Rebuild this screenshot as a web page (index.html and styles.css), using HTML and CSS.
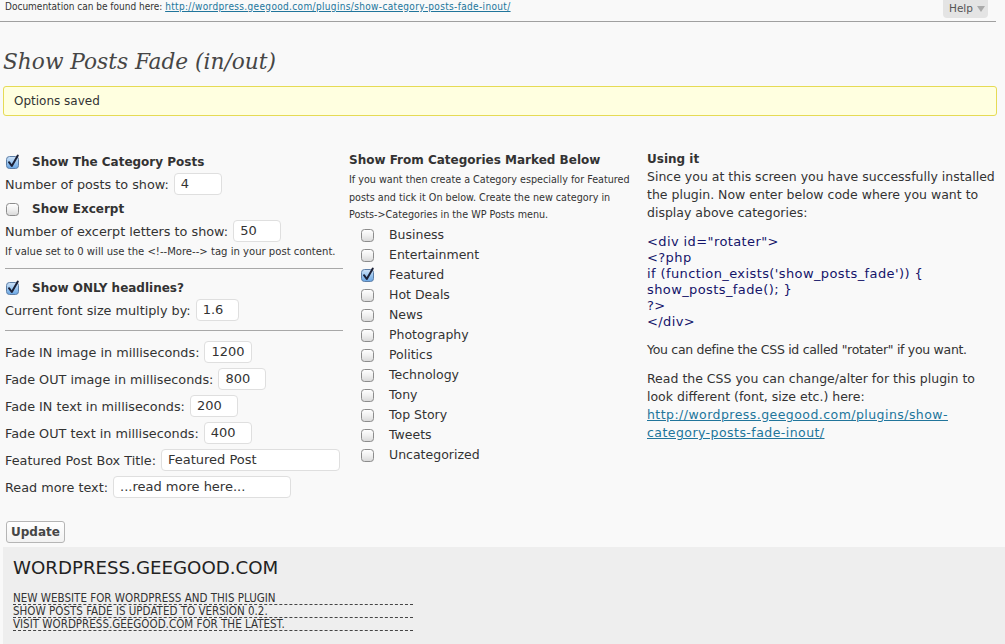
FILE: index.html
```html
<!DOCTYPE html>
<html>
<head>
<meta charset="utf-8">
<link rel="stylesheet" href="styles.css">
</head>
<body>
<div class="topbar">
  <div class="doc">Documentation can be found here: <a href="#">http://wordpress.geegood.com/plugins/show-category-posts-fade-inout/</a></div>
  <div class="help">Help <span class="tri"></span></div>
</div>

<h2 class="title">Show Posts Fade (in/out)</h2>

<div class="notice">Options saved</div>

<div class="columns">
  <div class="col-left">
    <div class="cbrow first"><svg class="cb" viewBox="0 0 14 14"><use href="#cb-on"/></svg><b>Show The Category Posts</b></div>
    <div class="inrow">Number of posts to show: <span class="inp w48">4</span></div>
    <div class="cbrow"><svg class="cb" viewBox="0 0 14 14"><use href="#cb-off"/></svg><b>Show Excerpt</b></div>
    <div class="inrow">Number of excerpt letters to show: <span class="inp w48">50</span></div>
    <div class="small">If value set to 0 will use the &lt;!--More--&gt; tag in your post content.</div>
    <div class="sep"></div>
    <div class="cbrow afterhr"><svg class="cb" viewBox="0 0 14 14"><use href="#cb-on"/></svg><b>Show ONLY headlines?</b></div>
    <div class="inrow">Current font size multiply by: <span class="inp w43">1.6</span></div>
    <div class="sep"></div>
    <div class="inrow fade first-fade">Fade IN image in milliseconds: <span class="inp w48">1200</span></div>
    <div class="inrow fade">Fade OUT image in milliseconds: <span class="inp w48">800</span></div>
    <div class="inrow fade">Fade IN text in milliseconds: <span class="inp w48">200</span></div>
    <div class="inrow fade">Fade OUT text in milliseconds: <span class="inp w48">400</span></div>
    <div class="inrow fade">Featured Post Box Title: <span class="inp w179">Featured Post</span></div>
    <div class="inrow fade">Read more text: <span class="inp w178">...read more here...</span></div>
    <div class="btnrow"><span class="btn">Update</span></div>
  </div>

  <div class="col-mid">
    <div class="mhead">Show From Categories Marked Below</div>
    <div class="mdesc">If you want then create a Category especially for Featured posts and tick it On below. Create the new category in Posts-&gt;Categories in the WP Posts menu.</div>
    <ul class="cats">
      <li><svg class="cb" viewBox="0 0 14 14"><use href="#cb-off"/></svg>Business</li>
      <li><svg class="cb" viewBox="0 0 14 14"><use href="#cb-off"/></svg>Entertainment</li>
      <li><svg class="cb" viewBox="0 0 14 14"><use href="#cb-on"/></svg>Featured</li>
      <li><svg class="cb" viewBox="0 0 14 14"><use href="#cb-off"/></svg>Hot Deals</li>
      <li><svg class="cb" viewBox="0 0 14 14"><use href="#cb-off"/></svg>News</li>
      <li><svg class="cb" viewBox="0 0 14 14"><use href="#cb-off"/></svg>Photography</li>
      <li><svg class="cb" viewBox="0 0 14 14"><use href="#cb-off"/></svg>Politics</li>
      <li><svg class="cb" viewBox="0 0 14 14"><use href="#cb-off"/></svg>Technology</li>
      <li><svg class="cb" viewBox="0 0 14 14"><use href="#cb-off"/></svg>Tony</li>
      <li><svg class="cb" viewBox="0 0 14 14"><use href="#cb-off"/></svg>Top Story</li>
      <li><svg class="cb" viewBox="0 0 14 14"><use href="#cb-off"/></svg>Tweets</li>
      <li><svg class="cb" viewBox="0 0 14 14"><use href="#cb-off"/></svg>Uncategorized</li>
    </ul>
  </div>

  <div class="col-right">
    <div class="rhead">Using it</div>
    <p class="rp">Since you at this screen you have successfully installed the plugin. Now enter below code where you want to display above categories:</p>
    <div class="code">&lt;div id="rotater"&gt;<br>&lt;?php<br>if (function_exists('show_posts_fade')) {<br>show_posts_fade(); }<br>?&gt;<br>&lt;/div&gt;</div>
    <p class="rp p2">You can define the CSS id called "rotater" if you want.</p>
    <p class="rp p3">Read the CSS you can change/alter for this plugin to look different (font, size etc.) here: <a class="rlink" href="#">http://wordpress.geegood.com/plugins/show-category-posts-fade-inout/</a></p>
  </div>
</div>

<div class="footer">
  <div class="fhead">WORDPRESS.GEEGOOD.COM</div>
  <div class="fline">NEW WEBSITE FOR WORDPRESS AND THIS PLUGIN</div>
  <div class="fline">SHOW POSTS FADE IS UPDATED TO VERSION 0.2.</div>
  <div class="fline">VISIT WORDPRESS.GEEGOOD.COM FOR THE LATEST.</div>
</div>

<svg class="defs" width="0" height="0">
  <defs>
    <linearGradient id="gOff" x1="0" y1="0" x2="0" y2="1">
      <stop offset="0" stop-color="#ffffff"/>
      <stop offset="0.5" stop-color="#f0f0f0"/>
      <stop offset="1" stop-color="#d8d8d8"/>
    </linearGradient>
    <linearGradient id="gOn" x1="0" y1="0" x2="0" y2="1">
      <stop offset="0" stop-color="#cfe3f8"/>
      <stop offset="0.5" stop-color="#9cc6ef"/>
      <stop offset="1" stop-color="#6aa6e4"/>
    </linearGradient>
    <g id="cb-off">
      <rect x="0.5" y="1.5" width="12" height="12" rx="3" fill="url(#gOff)" stroke="#8c8c8c"/>
    </g>
    <g id="cb-on">
      <rect x="0.5" y="1.5" width="12" height="12" rx="3" fill="url(#gOn)" stroke="#5d7ea6"/>
      <path d="M3 7.2 L5.8 11 L11.8 0.6" fill="none" stroke="#1b2036" stroke-width="2" stroke-linecap="round" stroke-linejoin="round"/>
    </g>
  </defs>
</svg>
</body>
</html>
```
FILE: styles.css
```css
html, body {
  margin: 0;
  padding: 0;
}
body {
  background: #f9f9f9;
  font-family: "DejaVu Sans", sans-serif;
  color: #333;
  font-size: 13px;
  min-height: 644px;
}
a {
  color: #21759b;
  text-decoration: underline;
}

.topbar {
  display: flex;
  justify-content: space-between;
  align-items: flex-start;
  margin-right: 9px;
  border-bottom: 1px solid #a0a0a0;
  box-sizing: border-box;
  height: 22px;
}
.doc {
  font-family: "DejaVu Sans Condensed", "DejaVu Sans", sans-serif;
  font-size: 10px;
  line-height: 13px;
  padding-left: 5px;
  color: #333;
}
.doc a {
  letter-spacing: 0.34px;
}
.help {
  margin-right: 8px;
  height: 18px;
  width: 45px;
  box-sizing: border-box;
  background: #e4e4e4;
  border-radius: 0 0 4px 4px;
  font-size: 10.5px;
  line-height: 16px;
  color: #555;
  padding-left: 6px;
}
.tri {
  display: inline-block;
  width: 0;
  height: 0;
  border-left: 4px solid transparent;
  border-right: 4px solid transparent;
  border-top: 6px solid #aaa;
  margin-left: 1px;
  vertical-align: 0px;
}

.title {
  margin: 25px 0 0 3px;
  font-family: "DejaVu Serif", serif;
  font-style: italic;
  font-weight: normal;
  font-size: 21.7px;
  line-height: 30px;
  color: #464646;
  height: 30px;
}

.notice {
  margin: 9px 8px 0 3px;
  height: 30px;
  box-sizing: border-box;
  background: #ffffe0;
  border: 1px solid #e6db55;
  border-radius: 3px;
  padding-left: 10px;
  font-size: 12px;
  line-height: 28px;
  color: #333;
}

.columns {
  display: grid;
  grid-template-columns: 338px 292px 1fr;
  column-gap: 6px;
  padding-left: 5px;
  margin-top: 33px;
}
.col-mid, .col-right {
  padding-top: 1px;
}

/* left column */
.cbrow, .inrow {
  display: flex;
  align-items: center;
  height: 22px;
  white-space: nowrap;
}
.cbrow { margin-top: 3px; }
.cbrow.first { margin-top: 2px; }
.cbrow b {
  font-size: 12px;
  font-weight: bold;
  margin-left: 12px;
}
.inrow {
  margin-top: 0;
  font-size: 12.8px;
}
.inrow.fade { margin-top: 5px; }
.inrow.first-fade { margin-top: 10px; }
.cb {
  width: 14px;
  height: 14px;
  overflow: visible;
  flex: none;
  margin-left: 1px;
}
.inp {
  display: inline-block;
  box-sizing: border-box;
  height: 22px;
  margin-left: 5px;
  background: #fff;
  border: 1px solid #dfdfdf;
  border-radius: 4px;
  padding-left: 6px;
  line-height: 20px;
  color: #333;
  font-size: 13px;
}
.w48 { width: 48px; }
.w43 { width: 43px; }
.w179 { width: 179px; }
.w178 { width: 178px; }
.small {
  font-family: "DejaVu Sans Condensed", "DejaVu Sans", sans-serif;
  font-size: 11.2px;
  line-height: 14px;
  margin-top: 3px;
  white-space: nowrap;
}
.sep {
  height: 1px;
  background: #a8a8a8;
  margin-top: 9px;
}
.sep + .cbrow { margin-top: 8px; }
.btnrow {
  margin-top: 23px;
  padding-left: 1px;
}
.btn {
  display: inline-block;
  box-sizing: border-box;
  height: 22px;
  padding: 0 4px;
  border: 1px solid #b5b5b5;
  border-radius: 3px;
  background: linear-gradient(#ffffff, #f2f2f2);
  font-size: 12px;
  font-weight: bold;
  line-height: 20px;
  color: #464646;
}

/* middle column */
.mhead {
  font-size: 12px;
  font-weight: bold;
  line-height: 21px;
}
.mdesc {
  font-family: "DejaVu Sans Condensed", "DejaVu Sans", sans-serif;
  font-size: 10.7px;
  line-height: 17.5px;
  padding-right: 2px;
}
.cats {
  list-style: none;
  margin: 1px 0 0 0;
  padding: 0 0 0 12px;
}
.cats li {
  display: flex;
  align-items: center;
  height: 20px;
  font-size: 12.5px;
}
.cats .cb {
  margin-left: 0;
  margin-right: 14px;
}

/* right column */
.rhead {
  font-size: 12px;
  font-weight: bold;
  line-height: 18px;
}
.rp {
  margin: 0;
  font-size: 12.5px;
  line-height: 18px;
  padding-right: 4px;
}
.rlink {
  letter-spacing: 0.45px;
}
.code {
  margin-top: 12px;
  font-size: 13px;
  letter-spacing: 0.4px;
  line-height: 16px;
  color: #14146a;
}
.rp.p2 {
  margin-top: 11px;
  letter-spacing: -0.3px;
}
.rp.p3 { margin-top: 11px; }

/* footer */
.footer {
  margin: 4px 0 0 3px;
  background: #eeeeee;
  padding: 10px 0 14px 10px;
  height: 97px;
  box-sizing: border-box;
}
.fhead {
  font-size: 18.2px;
  line-height: 22px;
  color: #222;
  margin-bottom: 13px;
}
.fline {
  width: 400px;
  font-family: "DejaVu Sans Condensed", "DejaVu Sans", sans-serif;
  font-size: 11.5px;
  line-height: 12px;
  border-bottom: 1px dashed #444;
  color: #333;
}
.defs {
  position: absolute;
  width: 0;
  height: 0;
}
```
